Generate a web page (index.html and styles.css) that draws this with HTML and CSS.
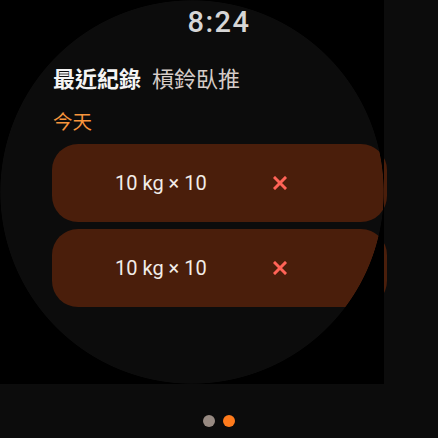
FILE: index.html
```html
<!DOCTYPE html>
<html>
<head>
<meta charset="utf-8">
<link rel="stylesheet" href="styles.css">
</head>
<body>
<div class="screen">
  <div class="content">
    <div class="time">8:24</div>
    <div class="title"><span class="title-main">最近紀錄</span><span class="title-sub">槓鈴臥推</span></div>
    <div class="section">今天</div>
    <div class="cards">
      <div class="card">
        <span class="set">10 kg × 10</span>
        <svg class="del" width="14" height="14" viewBox="0 0 14 14"><path d="M2 2L12 12M12 2L2 12" stroke="#ff6357" stroke-width="3" stroke-linecap="square"/></svg>
      </div>
      <div class="card">
        <span class="set">10 kg × 10</span>
        <svg class="del" width="14" height="14" viewBox="0 0 14 14"><path d="M2 2L12 12M12 2L2 12" stroke="#ff6357" stroke-width="3" stroke-linecap="square"/></svg>
      </div>
    </div>
  </div>
  <div class="bezel"></div>
  <div class="pager">
    <span class="dot dot-off"></span>
    <span class="dot dot-on"></span>
  </div>
</div>
</body>
</html>
```
FILE: styles.css
```css
html, body {
  margin: 0;
  padding: 0;
  background: #0c0c0c;
}
.screen {
  position: relative;
  width: 438px;
  height: 438px;
  overflow: hidden;
  font-family: Roboto, "Noto Sans CJK TC", sans-serif;
}
.content {
  display: flex;
  flex-direction: column;
  height: 384px;
}
.time {
  text-align: center;
  font-family: Roboto, sans-serif;
  font-size: 29px;
  font-weight: 500;
  letter-spacing: 1.5px;
  color: #d6d6d6;
  line-height: 34px;
  padding-top: 5px;
}
.title {
  display: flex;
  gap: 11px;
  padding-left: 53px;
  margin-top: 23px;
  font-family: "Noto Sans CJK TC", sans-serif;
  font-size: 22px;
  line-height: 30px;
}
.title-main {
  font-weight: 700;
  color: #f4f4f4;
}
.title-sub {
  font-weight: 400;
  color: #d6ccc8;
}
.section {
  padding-left: 53px;
  margin-top: 16px;
  font-family: "Noto Sans CJK TC", sans-serif;
  font-size: 19.5px;
  line-height: 26px;
  color: #f7953c;
}
.cards {
  display: flex;
  flex-direction: column;
  gap: 7px;
  padding-left: 52px;
  margin-top: 10px;
}
.card {
  width: 335px;
  height: 78px;
  border-radius: 26px;
  background: #4a1e0b;
  display: flex;
  align-items: center;
  padding-left: 63px;
  box-sizing: border-box;
}
.set {
  font-family: Roboto, sans-serif;
  font-size: 20px;
  color: #f1ece8;
  width: 158px;
}
.del {
  display: block;
}
.bezel {
  position: absolute;
  left: 0;
  top: 0;
  width: 384px;
  height: 384px;
  background: radial-gradient(circle 192px at 192px 192px, transparent 191.3px, #000 192px);
  pointer-events: none;
}
.pager {
  position: absolute;
  left: 0;
  right: 0;
  top: 415px;
  display: flex;
  justify-content: center;
  gap: 8px;
}
.dot {
  width: 12px;
  height: 12px;
  border-radius: 50%;
}
.dot-off {
  background: #978a82;
}
.dot-on {
  background: #ff7b1c;
}
```
